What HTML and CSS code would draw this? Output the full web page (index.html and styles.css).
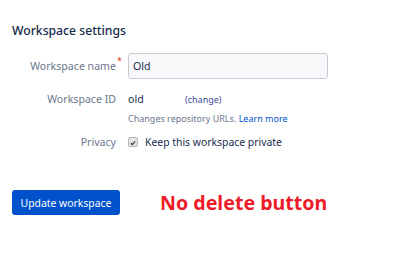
FILE: index.html
```html
<!DOCTYPE html>
<html lang="en">
<head>
<meta charset="utf-8">
<title>Workspace settings</title>
<link rel="stylesheet" href="styles.css">
</head>
<body>
<div class="page">
  <h2 class="title">Workspace settings</h2>
  <form class="form">
    <div class="row row-name">
      <label class="label" for="ws-name"><span class="req-wrap">Workspace name<span class="req">*</span></span></label>
      <div class="field"><input id="ws-name" class="input" type="text" value="Old"></div>
    </div>
    <div class="row row-id">
      <div class="label">Workspace ID</div>
      <div class="field">
        <div class="id-line"><span class="id-value">old</span><a class="change" href="#">(change)</a></div>
        <div class="help">Changes repository URLs. <a class="learn" href="#">Learn more</a></div>
      </div>
    </div>
    <div class="row row-privacy">
      <div class="label">Privacy</div>
      <div class="field">
        <label class="check"><span class="box"><svg viewBox="0 0 10 10" width="10" height="10"><path d="M2.3 5.2 L4.1 7 L7.7 2.9" fill="none" stroke="#333" stroke-width="1.6"/></svg></span>Keep this workspace private</label>
      </div>
    </div>
    <div class="actions">
      <button type="button" class="btn">Update workspace</button>
      <span class="note">No delete button</span>
    </div>
  </form>
</div>
</body>
</html>
```
FILE: styles.css
```css
* { box-sizing: border-box; }
html, body { margin: 0; padding: 0; background: #fff; }
body { font-family: "Noto Sans", "Open Sans", sans-serif; color: #172b4d; }
.page { padding: 21px 12px 0 12px; }
.title { margin: 0; font-size: 12.2px; font-weight: 500; line-height: 20px; color: #172b4d; }
.form { margin-top: 12px; }
.row { display: grid; grid-template-columns: 104px 200px; column-gap: 12px; }
.label { text-align: right; font-size: 10.6px; color: #6b778c; line-height: 16px; }
.row-name .label { padding-top: 5px; }
.req-wrap { position: relative; }
.req { color: #de350b; font-size: 9px; position: absolute; left: 100%; top: -4px; margin-left: 1px; line-height: 12px; }
.input { width: 200px; height: 26px; border: 1px solid #c9cdd3; border-radius: 3px; background: #f7f8fa; padding: 0 4px; font: inherit; font-size: 10.6px; color: #172b4d; display: block; }
.row-id { margin-top: 12px; }
.id-line { font-size: 10.6px; line-height: 16px; display: flex; align-items: baseline; }
.id-value { width: 57px; color: #172b4d; }
.change { color: #3c4a9a; text-decoration: none; font-size: 9px; }
.help { margin-top: 4px; font-size: 9px; color: #6b778c; line-height: 14px; }
.learn { color: #0052cc; text-decoration: none; }
.row-privacy { margin-top: 8px; }
.check { display: flex; align-items: center; gap: 7px; font-size: 10.4px; line-height: 16px; color: #172b4d; }
.box { width: 10px; height: 10px; border: 1px solid #b5b5b5; border-radius: 2px; background: #e6e6e6; display: flex; }
.box svg { display: block; }
.actions { margin-top: 40px; display: flex; align-items: center; gap: 40px; }
.btn { height: 25px; width: 108px; padding: 0; border: 0; border-radius: 3px; background: #0052cc; color: #fff; font: inherit; font-size: 10.4px; }
.note { color: #ee1c2a; font-weight: 700; font-size: 19.6px; line-height: 24px; }
```
